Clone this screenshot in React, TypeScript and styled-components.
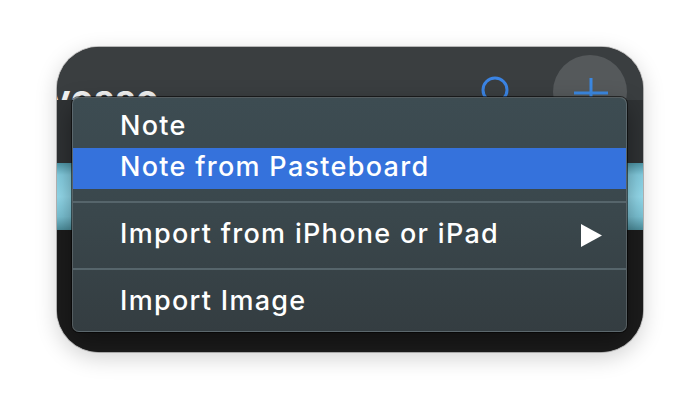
import styled, { createGlobalStyle } from "styled-components";

const GlobalStyle = createGlobalStyle`
  html, body {
    margin: 0;
    padding: 0;
    background: #ffffff;
  }
  body {
    font-family: Inter, "Liberation Sans", sans-serif;
  }
`;

type Item =
  | { kind: "item"; label: string; active?: boolean; submenu?: boolean }
  | { kind: "separator" };

const items: Item[] = [
  { kind: "item", label: "Note" },
  { kind: "item", label: "Note from Pasteboard", active: true },
  { kind: "separator" },
  { kind: "item", label: "Import from iPhone or iPad", submenu: true },
  { kind: "separator" },
  { kind: "item", label: "Import Image" },
];

export default function App() {
  return (
    <>
      <GlobalStyle />
      <Stage>
        <Window>
          <Header>
            <Title>vosso</Title>
            <SearchIcon width="30" height="30" viewBox="0 0 30 30">
              <circle cx="15" cy="15" r="12" fill="none" stroke="#3b84e4" strokeWidth="3" />
            </SearchIcon>
            <AddButton>
              <svg width="36" height="36" viewBox="0 0 36 36">
                <path d="M19 4 V36 M2 19 H36" stroke="#3b88e2" strokeWidth="3" fill="none" />
              </svg>
            </AddButton>
          </Header>
          <DarkStrip />
          <CyanBand />
          <Body />

          <Menu>
            {items.map((it, i) =>
              it.kind === "separator" ? (
                <Separator key={i} />
              ) : (
                <MenuRow key={i} $active={it.active}>
                  <span>{it.label}</span>
                  {it.submenu && (
                    <svg width="21" height="23" viewBox="0 0 21 23">
                      <polygon points="0,0 21,11.5 0,23" fill="#ffffff" />
                    </svg>
                  )}
                </MenuRow>
              )
            )}
          </Menu>
        </Window>
      </Stage>
    </>
  );
}

const Stage = styled.div`
  width: 700px;
  height: 420px;
  box-sizing: border-box;
  padding: 47px 57px 0 57px;
  background: #ffffff;
`;

const Window = styled.div`
  position: relative;
  width: 586px;
  height: 305px;
  border-radius: 42px;
  overflow: hidden;
  display: flex;
  flex-direction: column;
  background: #1c1c1c;
  box-shadow: 0 6px 22px rgba(0, 0, 0, 0.18), 0 0 0 1px rgba(0, 0, 0, 0.25);
`;

const Header = styled.div`
  height: 53px;
  flex: none;
  display: flex;
  align-items: flex-start;
  background: #3a3e40;
`;

const Title = styled.div`
  margin: 33px 0 0 -8px;
  font-family: Inter, "Liberation Sans", sans-serif;
  font-weight: 700;
  font-size: 36px;
  line-height: 36px;
  color: #f2f2f2;
  letter-spacing: 1px;
`;

const SearchIcon = styled.svg`
  flex: none;
  margin: 28px 0 0 auto;
`;

const AddButton = styled.div`
  flex: none;
  width: 74px;
  height: 74px;
  margin: 8px 16px 0 43px;
  border-radius: 50%;
  background: #55595b;
  display: flex;
  align-items: center;
  justify-content: center;
  position: relative;
  z-index: 1;
`;

const DarkStrip = styled.div`
  height: 63px;
  flex: none;
  background: #2f3234;
`;

const CyanBand = styled.div`
  height: 67px;
  flex: none;
  background: linear-gradient(
    180deg,
    #4f97a8 0%,
    #86cfe2 18%,
    #95dcee 50%,
    #7cc4d6 80%,
    #4d8e9c 100%
  );
`;

const Body = styled.div`
  flex: 1;
  background: #1c1c1c;
`;

const Menu = styled.div`
  position: absolute;
  left: 15px;
  top: 50px;
  width: 555px;
  height: 235px;
  box-sizing: border-box;
  padding: 9px 0 8px;
  border-radius: 7px;
  border: 1px solid rgba(255, 255, 255, 0.16);
  background: linear-gradient(180deg, #3d4c52 0%, #3a474c 50%, #343d41 100%);
  box-shadow: 0 0 0 1px rgba(0, 0, 0, 0.55), 0 10px 24px rgba(0, 0, 0, 0.4);
  z-index: 2;
`;

const MenuRow = styled.div<{ $active?: boolean }>`
  height: 41px;
  display: flex;
  align-items: center;
  justify-content: space-between;
  padding: 0 24px 0 47px;
  background: ${(p) => (p.$active ? "#3572dc" : "transparent")};
  color: #ffffff;
  font-family: Inter, "Liberation Sans", sans-serif;
  font-weight: 500;
  font-size: 27px;
  letter-spacing: 1.3px;
  span {
    margin-top: -4px;
  }
`;

const Separator = styled.div`
  height: 26px;
  display: flex;
  align-items: center;
  &::before {
    content: "";
    display: block;
    width: 100%;
    height: 2px;
    background: #56656b;
  }
`;
